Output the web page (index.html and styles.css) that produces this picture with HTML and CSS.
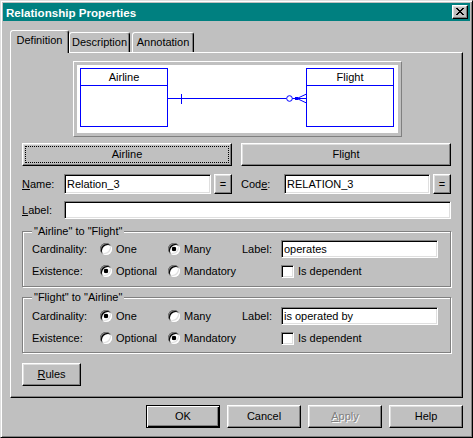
FILE: index.html
```html
<!DOCTYPE html>
<html>
<head>
<meta charset="utf-8">
<title>Relationship Properties</title>
<link rel="stylesheet" href="styles.css">
</head>
<body>
<div class="window">
  <div class="titlebar">
    <span class="title">Relationship Properties</span>
    <button class="close" aria-label="Close">
      <svg width="8" height="7" viewBox="0 0 8 7" shape-rendering="crispEdges"><path fill="#000" d="M0 0h2v1H0z M6 0h2v1H6z M1 1h2v1H1z M5 1h2v1H5z M2 2h4v1H2z M3 3h2v1H3z M2 4h4v1H2z M1 5h2v1H1z M5 5h2v1H5z M0 6h2v1H0z M6 6h2v1H6z"/></svg>
    </button>
  </div>

  <div class="tabstrip">
    <div class="tab tab-active">Definition</div>
    <div class="tab tab-desc">Description</div>
    <div class="tab tab-anno">Annotation</div>
  </div>

  <div class="panel">
    <div class="diagram">
      <svg width="321" height="68" viewBox="0 0 321 68" class="diagram-svg">
        <g fill="none" stroke="#0000ff" stroke-width="1">
          <rect x="3.5" y="3.5" width="87" height="58"/>
          <line x1="3.5" y1="20.5" x2="90.5" y2="20.5"/>
          <rect x="229.5" y="3.5" width="87" height="58"/>
          <line x1="229.5" y1="20.5" x2="316.5" y2="20.5"/>
          <line x1="90.5" y1="33.5" x2="209.5" y2="33.5"/>
          <line x1="104.5" y1="29" x2="104.5" y2="39"/>
          <circle cx="212.5" cy="33.5" r="2.8"/>
          <line x1="215.3" y1="33.5" x2="229.5" y2="33.5"/>
          <line x1="220" y1="33.5" x2="229.5" y2="29"/>
          <line x1="220" y1="33.5" x2="229.5" y2="38"/>
        </g>
        <rect x="218" y="32" width="3" height="3" fill="#0000ff"/>
        <text x="47" y="15.5" text-anchor="middle" class="dtext">Airline</text>
        <text x="273" y="15.5" text-anchor="middle" class="dtext">Flight</text>
      </svg>
    </div>

    <div class="entity-row">
      <button class="btn btn-wide btn-focus">Airline</button>
      <button class="btn btn-wide">Flight</button>
    </div>

    <div class="field-row">
      <label class="lbl lbl-name"><u>N</u>ame:</label>
      <input class="input input-name" type="text" value="Relation_3" readonly>
      <button class="btn btn-eq">=</button>
      <label class="lbl lbl-code">Cod<u>e</u>:</label>
      <input class="input input-code" type="text" value="RELATION_3" readonly>
      <button class="btn btn-eq">=</button>
    </div>

    <div class="field-row label-row">
      <label class="lbl lbl-name"><u>L</u>abel:</label>
      <input class="input input-label" type="text" value="" readonly>
    </div>

    <div class="group group-1">
      <span class="group-title">"Airline" to "Flight"</span>
      <div class="group-grid">
        <span class="glabel">Cardinality:</span>
        <span class="opt"><span class="radio"></span>One</span>
        <span class="opt"><span class="radio checked"></span>Many</span>
        <span class="glabel">Label:</span>
        <input class="input input-small" type="text" value="operates" readonly>
        <span class="glabel">Existence:</span>
        <span class="opt"><span class="radio checked"></span>Optional</span>
        <span class="opt"><span class="radio"></span>Mandatory</span>
        <span></span>
        <span class="opt"><span class="check"></span>Is dependent</span>
      </div>
    </div>

    <div class="group group-2">
      <span class="group-title">"Flight" to "Airline"</span>
      <div class="group-grid">
        <span class="glabel">Cardinality:</span>
        <span class="opt"><span class="radio checked"></span>One</span>
        <span class="opt"><span class="radio"></span>Many</span>
        <span class="glabel">Label:</span>
        <input class="input input-small" type="text" value="is operated by" readonly>
        <span class="glabel">Existence:</span>
        <span class="opt"><span class="radio"></span>Optional</span>
        <span class="opt"><span class="radio checked"></span>Mandatory</span>
        <span></span>
        <span class="opt"><span class="check"></span>Is dependent</span>
      </div>
    </div>

    <button class="btn btn-rules"><u>R</u>ules</button>
  </div>

  <div class="footer">
    <button class="btn btn-foot btn-default">OK</button>
    <button class="btn btn-foot">Cancel</button>
    <button class="btn btn-foot btn-disabled"><u>A</u>pply</button>
    <button class="btn btn-foot">Help</button>
  </div>
</div>
</body>
</html>
```

FILE: styles.css
```css
* {
  box-sizing: border-box;
}

body {
  margin: 0;
  background: #c0c0c0;
  font-family: "Liberation Sans", Arial, sans-serif;
  font-size: 11px;
  color: #000;
}

u {
  text-decoration: underline;
  text-underline-offset: 1px;
}

.window {
  width: 473px;
  height: 438px;
  border: 1px solid;
  border-color: #dfdfdf #000 #000 #dfdfdf;
  box-shadow: inset 1px 1px 0 #fff, inset -1px -1px 0 #808080;
  padding: 2px;
  display: flex;
  flex-direction: column;
  background: #c0c0c0;
}

.titlebar {
  height: 18px;
  background: #008080;
  display: flex;
  align-items: center;
  justify-content: space-between;
  padding: 0 2px 0 3px;
}

.title {
  color: #fff;
  font-weight: bold;
  font-size: 11.6px;
}

.close {
  width: 16px;
  height: 14px;
  padding: 0 1px 1px 0;
  background: #c0c0c0;
  border: 1px solid;
  border-color: #fff #000 #000 #fff;
  box-shadow: inset -1px -1px 0 #808080, inset 1px 1px 0 #dfdfdf;
  display: flex;
  align-items: center;
  justify-content: center;
}

.close svg {
  display: block;
}

/* tabs */
.tabstrip {
  display: flex;
  align-items: flex-end;
  height: 22px;
  margin: 9px 0 0 7px;
  position: relative;
  z-index: 1;
}

.tab {
  height: 20px;
  padding-top: 3px;
  text-align: center;
  border: 1px solid;
  border-bottom: none;
  border-color: #fff #000 transparent #fff;
  box-shadow: inset -1px 0 0 #808080;
  border-radius: 3px 3px 0 0;
  background: #c0c0c0;
  line-height: 13px;
}

.tab-active {
  width: 59px;
  height: 23px;
  margin-bottom: -1px;
  padding-top: 3px;
}

.tab-desc {
  width: 61px;
}

.tab-anno {
  width: 62px;
  margin-left: 2px;
}

/* panel */
.panel {
  width: 453px;
  height: 346px;
  margin-left: 7px;
  border: 1px solid;
  border-color: #fff #000 #000 #fff;
  box-shadow: inset -1px -1px 0 #808080;
  padding: 8px 11px 0 11px;
  display: flex;
  flex-direction: column;
  align-items: flex-start;
}

.diagram {
  width: 329px;
  height: 76px;
  margin-left: 51px;
  border: 1px solid;
  border-color: #fff #808080 #808080 #fff;
  padding: 3px;
}

.diagram-svg {
  display: block;
  background: #fff;
}

.dtext {
  font-family: "Liberation Sans", Arial, sans-serif;
  font-size: 11px;
  fill: #000;
}

/* buttons */
.btn {
  font: inherit;
  color: #000;
  background: #c0c0c0;
  padding: 0;
  border: 1px solid;
  border-color: #fff #000 #000 #fff;
  box-shadow: inset -1px -1px 0 #808080, inset 1px 1px 0 #dfdfdf;
  display: flex;
  align-items: center;
  justify-content: center;
  line-height: 13px;
}

.entity-row {
  display: flex;
  gap: 9px;
  margin-top: 6px;
}

.btn-wide {
  width: 210px;
  height: 23px;
}

.btn-focus {
  outline: 1px dotted #000;
  outline-offset: -4px;
}

.field-row {
  display: flex;
  align-items: center;
  height: 20px;
  margin-top: 8px;
}

.label-row {
  height: 18px;
  margin-top: 7px;
  width: 100%;
}

.lbl {
  display: block;
}

.lbl-name {
  width: 42px;
}

.lbl-code {
  width: 43px;
  margin-left: 9px;
}

.input {
  font: inherit;
  color: #000;
  background: #fff;
  height: 20px;
  border: 1px solid;
  border-color: #808080 #fff #fff #808080;
  box-shadow: inset 1px 1px 0 #000, inset -1px -1px 0 #dfdfdf;
  padding: 0 1px 0 2px;
  margin: 0;
  outline: none;
}

.input-name {
  width: 147px;
}

.input-code {
  width: 146px;
}

.input-label {
  flex: 1;
  height: 18px;
}

.btn-eq {
  width: 18px;
  height: 20px;
  margin-left: 3px;
}

/* group boxes */
.group {
  position: relative;
  width: 429px;
  height: 56px;
  border: 1px solid #808080;
  box-shadow: inset 1px 1px 0 #fff, 1px 1px 0 #fff;
  padding: 6px 0 0 9px;
  margin-top: 12px;
}

.group-2 {
  margin-top: 10px;
  padding-top: 7px;
}

.group-title {
  position: absolute;
  top: -7px;
  left: 9px;
  padding: 0 2px;
  background: #c0c0c0;
  line-height: 13px;
}

.group-grid {
  display: grid;
  grid-template-columns: 68px 68px 74px 39px 157px;
  grid-auto-rows: 22px;
  align-items: center;
}

.opt {
  display: flex;
  align-items: center;
  gap: 4px;
}

.radio {
  width: 12px;
  height: 12px;
  border-radius: 50%;
  background: #fff;
  box-shadow: inset 1px 1px 0 #808080, inset -1px -1px 0 #fff, inset 2px 2px 0 #000, inset -2px -2px 0 #dfdfdf;
  flex: none;
}

.radio.checked {
  background: radial-gradient(circle at 50% 50%, #000 0, #000 2px, #fff 2.6px);
}

.check {
  width: 13px;
  height: 13px;
  background: #fff;
  border: 1px solid;
  border-color: #808080 #fff #fff #808080;
  box-shadow: inset 1px 1px 0 #000, inset -1px -1px 0 #dfdfdf;
  flex: none;
}

.input-small {
  height: 18px;
  width: 157px;
}

.btn-rules {
  width: 59px;
  height: 23px;
  margin-top: 10px;
}

/* footer */
.footer {
  display: flex;
  justify-content: flex-end;
  gap: 7px;
  margin-top: 7px;
  padding-right: 7px;
}

.btn-foot {
  width: 74px;
  height: 23px;
}

.btn-default {
  border: 1px solid #000;
  box-shadow: inset 1px 1px 0 #fff, inset -1px -1px 0 #000, inset -2px -2px 0 #808080;
}

.btn-disabled {
  color: #808080;
  text-shadow: 1px 1px 0 #fff;
}
```
